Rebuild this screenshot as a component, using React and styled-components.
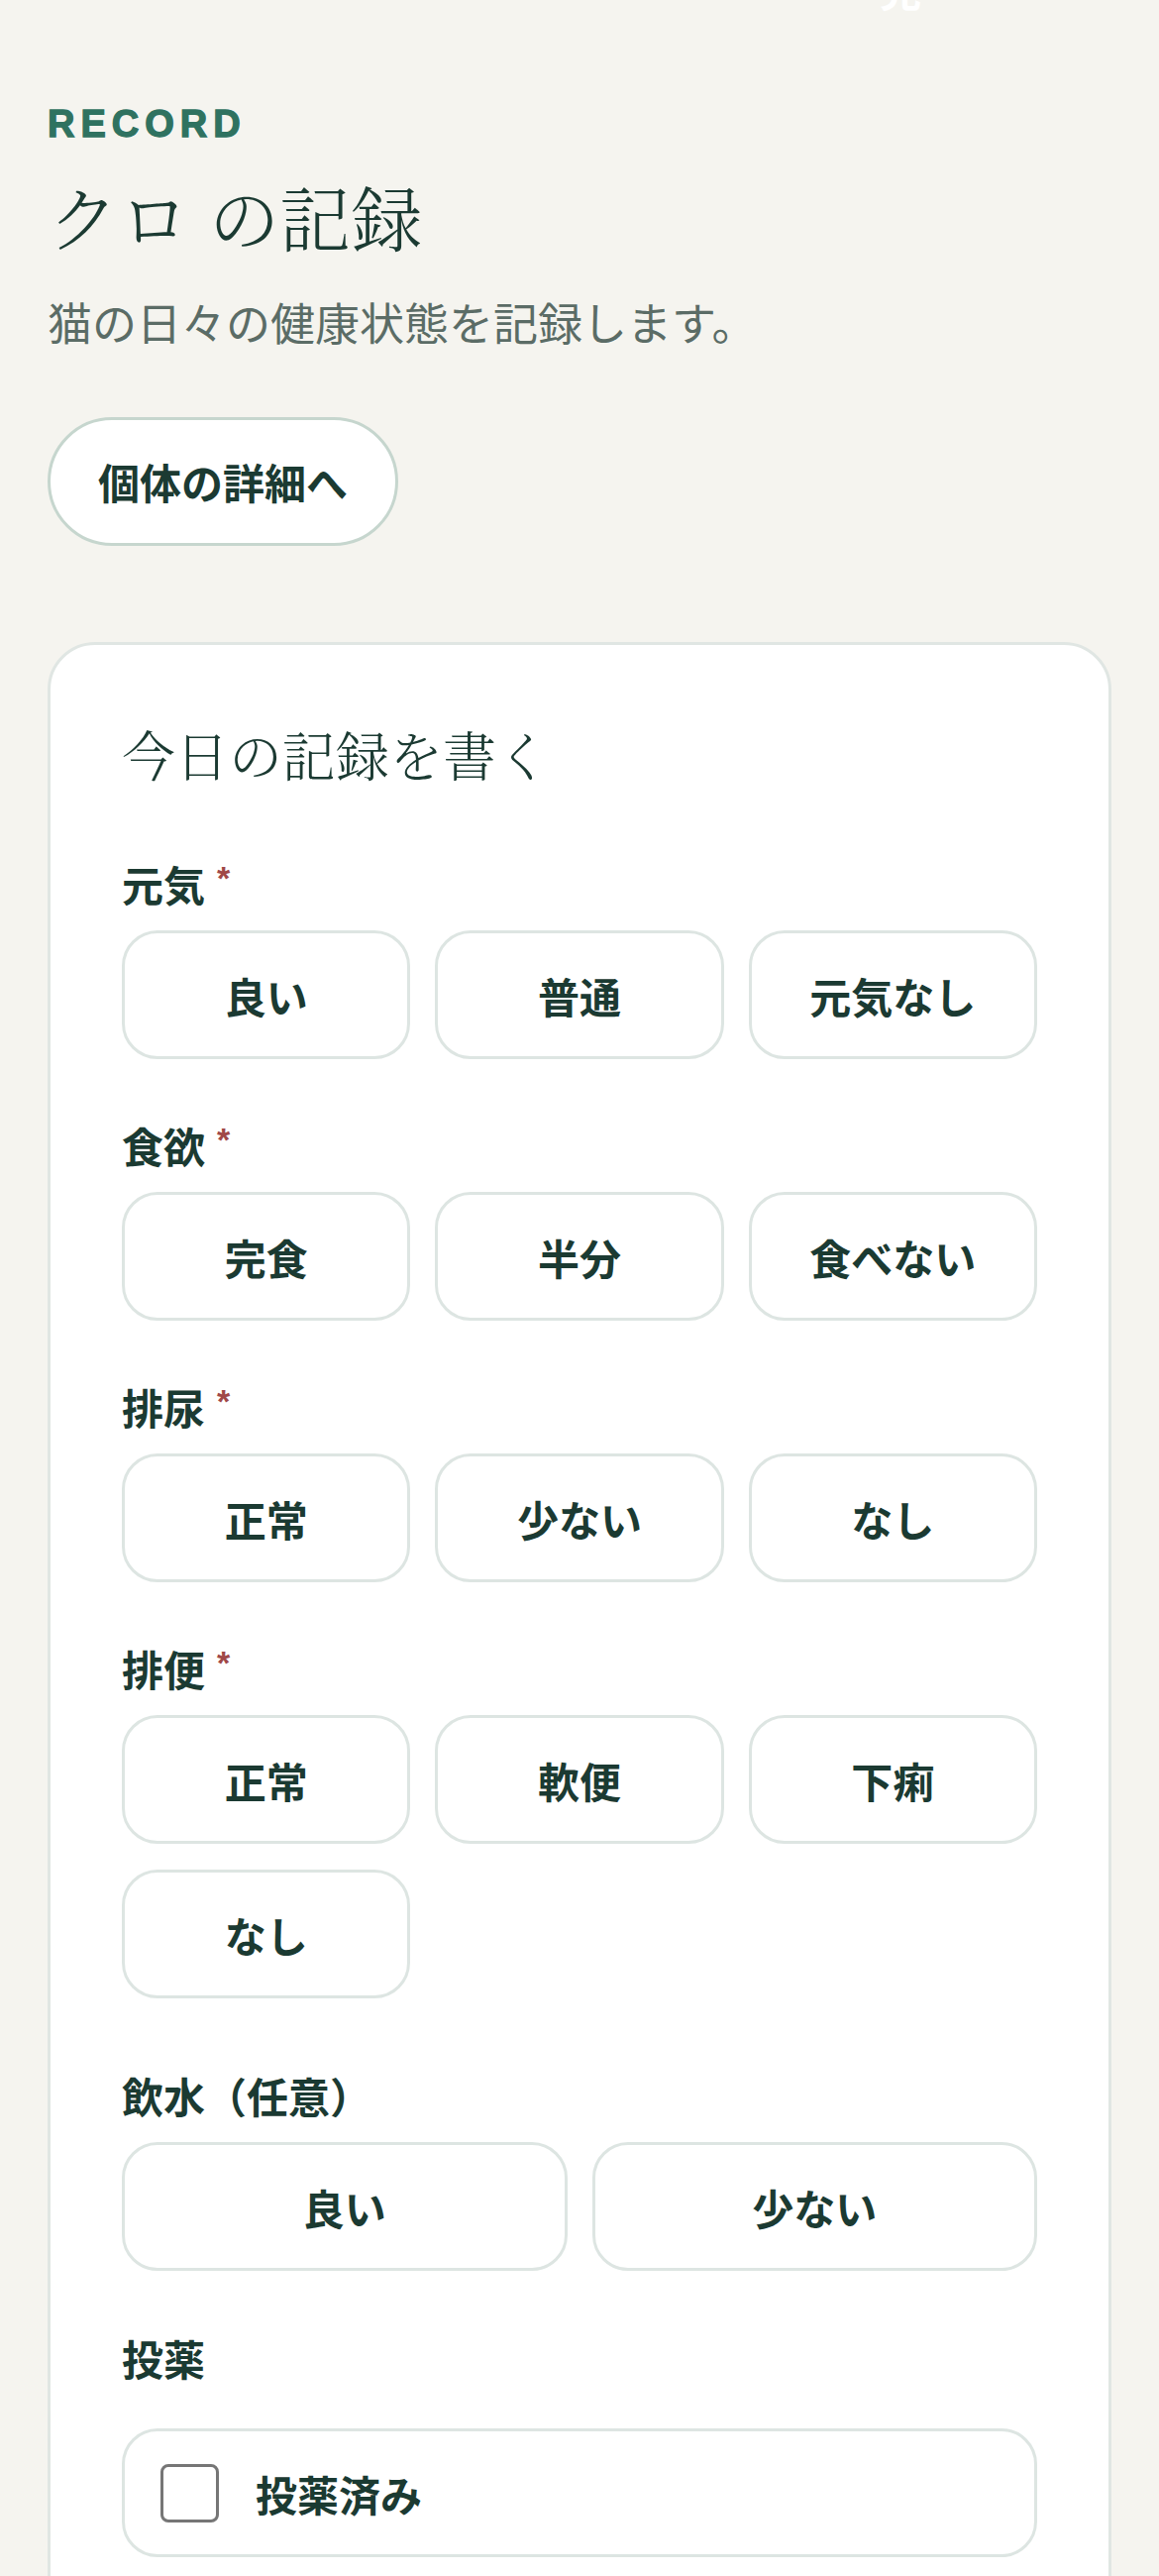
import React from "react";
import styled, { createGlobalStyle } from "styled-components";

const GlobalStyle = createGlobalStyle`
  * { box-sizing: border-box; }
  html, body { margin: 0; padding: 0; }
  body {
    background: #f5f4ef;
    font-family: "Noto Sans CJK JP", "Noto Sans", sans-serif;
    color: #1b3a32;
  }
`;

const Page = styled.main`
  position: relative;
  padding: 103px 48px 0;
  overflow: hidden;
`;

const HeaderGhost = styled.span`
  position: absolute;
  top: -41px;
  left: 888px;
  font-size: 42px;
  line-height: 60px;
  font-weight: 700;
  color: #ffffff;
`;

const Eyebrow = styled.div`
  font-family: "Liberation Sans", Arial, sans-serif;
  font-weight: 700;
  font-size: 38px;
  line-height: 45.6px;
  letter-spacing: 6px;
  color: #2f7260;
  -webkit-text-stroke: 1.3px #2f7260;
`;

const Title = styled.h1`
  margin: 18px 0 0;
  font-family: "Noto Serif CJK JP", "Noto Serif JP", "Noto Sans CJK JP", serif;
  font-weight: 300;
  font-size: 72px;
  line-height: 100.8px;
  color: #1b3a32;
`;

const Lead = styled.p`
  margin: 24px 0 0;
  font-size: 45px;
  line-height: 67.2px;
  color: #5b6c66;
`;

const PillLink = styled.a`
  display: inline-flex;
  align-items: center;
  justify-content: center;
  margin-top: 62px;
  height: 130px;
  padding: 0 48px;
  border: 3px solid #c6d6ce;
  border-radius: 999px;
  background: #ffffff;
  font-size: 42px;
  font-weight: 700;
  color: #1b3a32;
  text-decoration: none;
`;

const Card = styled.section`
  margin-top: 97px;
  background: #ffffff;
  border: 3px solid #e0e6e3;
  border-radius: 48px;
  padding: 72px 72px 120px;
`;

const CardTitle = styled.h2`
  margin: 0 0 64px;
  font-family: "Noto Serif CJK JP", "Noto Serif JP", "Noto Sans CJK JP", serif;
  font-weight: 300;
  font-size: 54px;
  line-height: 75.6px;
  color: #1b3a32;
`;

const Field = styled.div`
  display: flex;
  flex-direction: column;
  gap: ${(p) => p.$gap}px;
  margin-top: ${(p) => p.$top}px;
`;

const FieldLabel = styled.div`
  display: flex;
  align-items: center;
  font-size: 42px;
  line-height: 60px;
  font-weight: 700;
  color: #1b3a32;
`;

const Required = styled.span`
  margin-left: 12px;
  font-family: "Liberation Sans", Arial, sans-serif;
  font-size: 34px;
  font-weight: 700;
  color: #a04848;
  align-self: flex-start;
  line-height: 48px;
`;

const OptionGrid = styled.div`
  display: grid;
  grid-template-columns: repeat(${(p) => p.$cols}, 1fr);
  gap: 26px 25px;
`;

const OptionButton = styled.button`
  height: 130px;
  border: 3px solid #dde5e2;
  border-radius: 36px;
  background: #ffffff;
  font-family: "Noto Sans CJK JP", sans-serif;
  font-size: 42px;
  font-weight: 700;
  color: #1b3a32;
  cursor: pointer;
`;

const CheckRow = styled.label`
  display: flex;
  align-items: center;
  gap: 37px;
  height: 130px;
  padding: 0 36px;
  border: 3px solid #dde5e2;
  border-radius: 36px;
  font-size: 42px;
  font-weight: 700;
  color: #1b3a32;
`;

const CheckBox = styled.input`
  appearance: none;
  margin: 0;
  width: 59px;
  height: 59px;
  border: 3px solid #767676;
  border-radius: 8px;
  background: #ffffff;
`;

const sections = [
  { label: "元気", required: true, options: ["良い", "普通", "元気なし"], cols: 3 },
  { label: "食欲", required: true, options: ["完食", "半分", "食べない"], cols: 3 },
  { label: "排尿", required: true, options: ["正常", "少ない", "なし"], cols: 3 },
  { label: "排便", required: true, options: ["正常", "軟便", "下痢", "なし"], cols: 3 },
  { label: "飲水（任意）", required: false, options: ["良い", "少ない"], cols: 2, extra: 11 },
];

export default function App() {
  return (
    <>
      <GlobalStyle />
      <Page>
        <HeaderGhost>見</HeaderGhost>
        <Eyebrow>RECORD</Eyebrow>
        <Title>クロ の記録</Title>
        <Lead>猫の日々の健康状態を記録します。</Lead>
        <PillLink href="#">個体の詳細へ</PillLink>
        <Card>
          <CardTitle>今日の記録を書く</CardTitle>
          {sections.map((s, i) => (
            <Field key={s.label} $gap={17} $top={i === 0 ? 0 : 57 + (s.extra || 0)}>
              <FieldLabel>
                {s.label}
                {s.required && <Required>*</Required>}
              </FieldLabel>
              <OptionGrid $cols={s.cols}>
                {s.options.map((o) => (
                  <OptionButton key={o} type="button">{o}</OptionButton>
                ))}
              </OptionGrid>
            </Field>
          ))}
          <Field $gap={41} $top={58}>
            <FieldLabel>投薬</FieldLabel>
            <CheckRow>
              <CheckBox type="checkbox" />
              投薬済み
            </CheckRow>
          </Field>
        </Card>
      </Page>
    </>
  );
}
